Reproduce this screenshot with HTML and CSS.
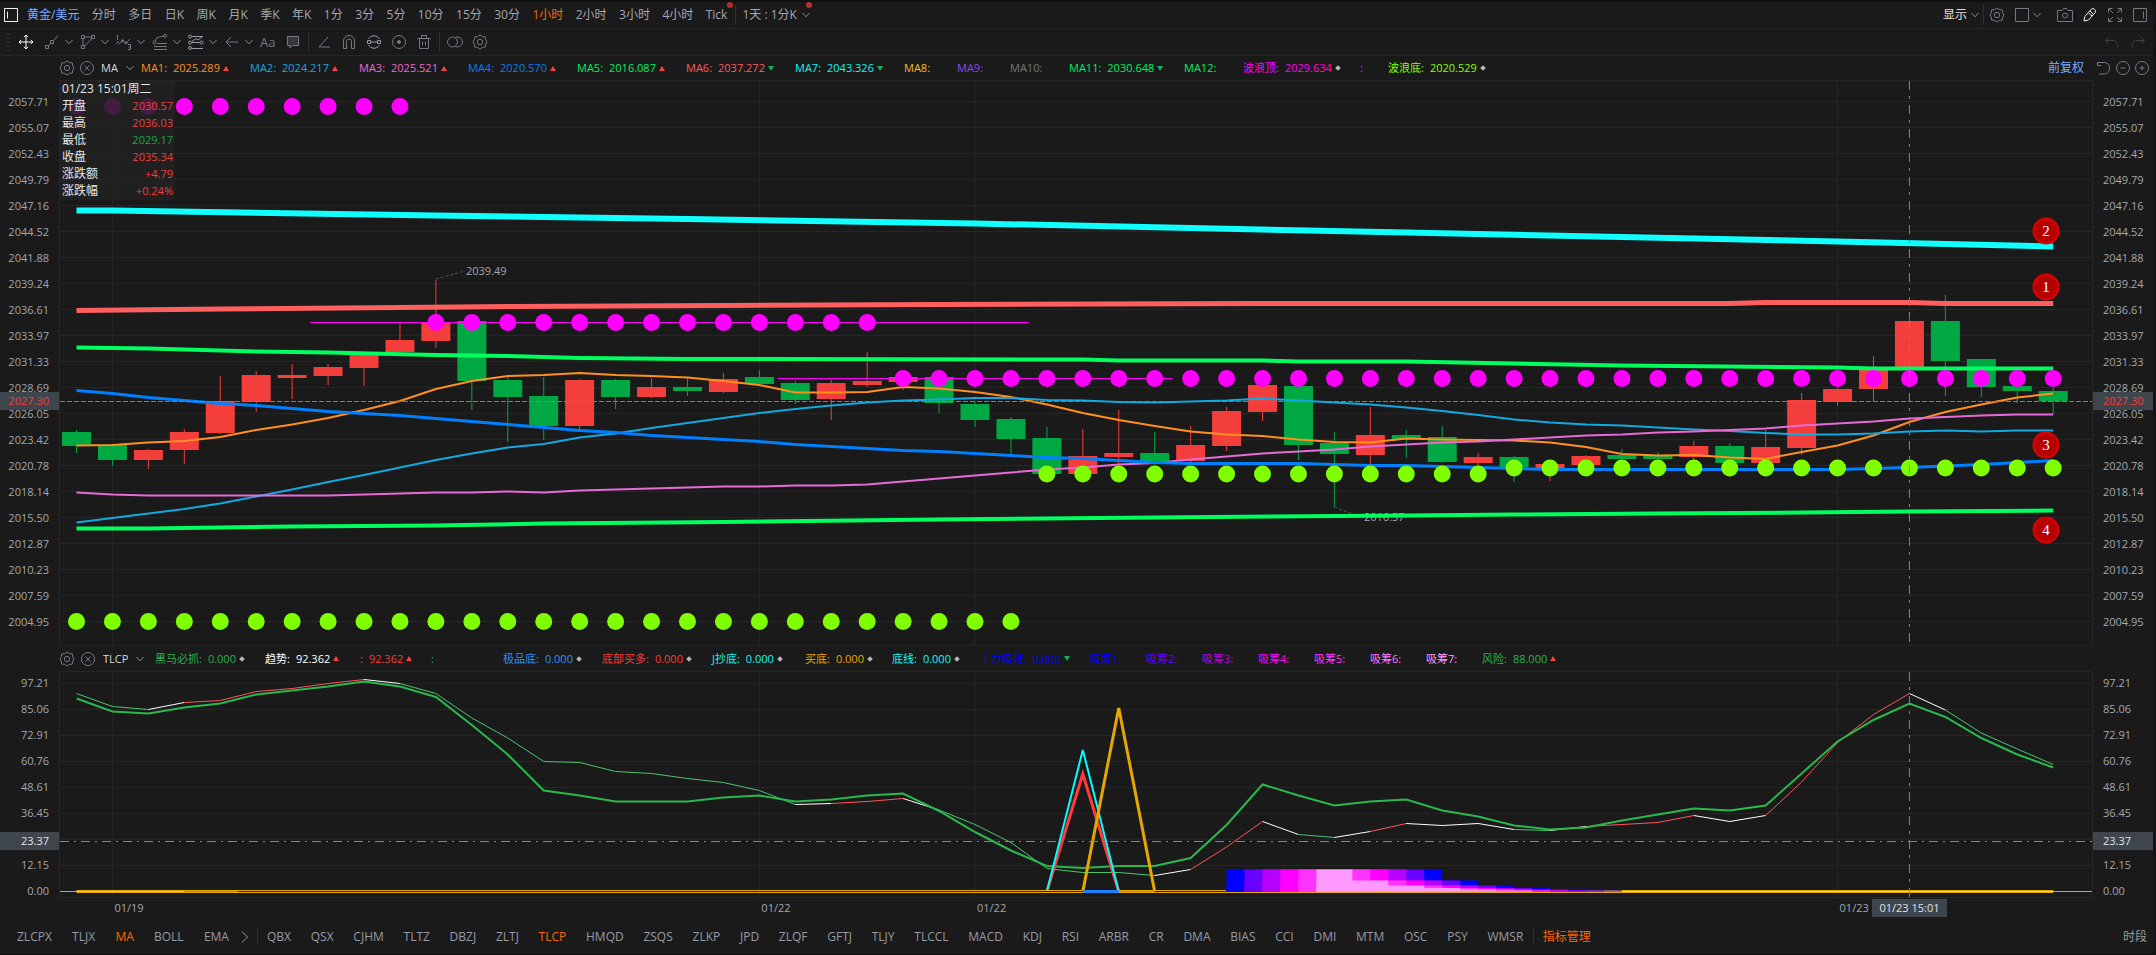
FILE: index.html
```html
<!DOCTYPE html>
<html lang="zh-CN">
<head>
<meta charset="utf-8">
<title>黄金/美元</title>
<link rel="stylesheet" href="styles.css">
</head>
<body>
<svg class="sprite" aria-hidden="true">
  <symbol id="chev" viewBox="0 0 10 10"><path d="M1.500 3 5 6.800 8.500 3"/></symbol>
  <symbol id="gear" viewBox="0 0 16 16"><path d="M5.700 2.600 8 1l2.300 1.600 3 .3.4 2.900L15 8l-1.300 2.200-.4 2.900-3 .3L8 15l-2.300-1.600-3-.3-.4-2.900L1 8l1.300-2.200.4-2.900z"/><circle cx="8" cy="8" r="2.700"/></symbol>
  <symbol id="close" viewBox="0 0 16 16"><circle cx="8" cy="8" r="6.500"/><path d="m5.500 5.500 5 5m0-5-5 5"/></symbol>
  <symbol id="undo" viewBox="0 0 16 16"><path d="M5 3 1.500 6.500 5 10M1.500 6.500H9q5 0 5 7"/></symbol>
  <symbol id="redo" viewBox="0 0 16 16"><path d="m11 3 3.500 3.500L11 10m3.500-3.500H7q-5 0-5 7"/></symbol>
</svg>

<header class="topbar">
  <button class="icon-btn bright" aria-label="侧栏"><svg viewBox="0 0 16 16"><path d="M1.500 1.500h13v13h-13zM4.500 4.500v7"/></svg></button>
  <nav class="periods">
    <button class="symbol-name">黄金/美元</button><button>分时</button><button>多日</button><button>日K</button><button>周K</button><button>月K</button><button>季K</button><button>年K</button><button>1分</button><button>3分</button><button>5分</button><button>10分</button><button>15分</button><button>30分</button><button class="active">1小时</button><button>2小时</button><button>3小时</button><button>4小时</button><button class="dotted">Tick</button>
  </nav>
  <span class="sep"></span>
  <button class="custom dotted">1天 : 1分K <svg class="chev"><use href="#chev"/></svg></button>
  <div class="top-actions">
    <button class="show">显示 <svg class="chev"><use href="#chev"/></svg></button>
    <span class="sep"></span>
    <button class="icon-btn" aria-label="设置"><svg><use href="#gear"/></svg></button>
    <button class="icon-btn layout" aria-label="布局"><svg viewBox="0 0 16 16"><path d="M1.500 1.500h13v13h-13z"/></svg><svg class="chev"><use href="#chev"/></svg></button>
    <button class="icon-btn" aria-label="截图"><svg viewBox="0 0 16 16"><path d="M.5 3.500H5l1.500-2h3l1.500 2h4.500v11H.5z"/><circle cx="8" cy="8.500" r="2.500"/></svg></button>
    <button class="icon-btn bright" aria-label="画线"><svg viewBox="0 0 16 16"><path d="m2 14 .8-4.500L9.500 2q1.300-1.300 3 .3t.7 3.200L6.500 13zM8 4l3.500 3.500M6.500 6l3.500 3"/></svg></button>
    <button class="icon-btn" aria-label="全屏"><svg viewBox="0 0 16 16"><path d="M1.500 5.500v-4h4m5 0h4v4m0 5v4h-4m-5 0h-4v-4M2 2l4 4m8-4-4 4m4 8-4-4m-8 4 4-4"/></svg></button>
    <button class="icon-btn" aria-label="右侧栏"><svg viewBox="0 0 16 16"><path d="M1.500 1.500h13v13h-13zM11.500 4.500v7"/></svg></button>
  </div>
</header>

<div class="toolbar">
  <span class="grip"></span>
  <button class="tool move" aria-label="移动"><svg viewBox="0 0 16 16"><path d="M8 1v14M1 8h14M6 3.200 8 1l2 2.200M6 12.800 8 15l2-2.200M3.200 6 1 8l2.200 2M12.800 6 15 8l-2.200 2"/></svg></button>
  <button class="tool combo" aria-label="线段"><svg viewBox="0 0 16 16"><path d="M1.500 11.500h3v3h-3zM6.500 6.500h3v3h-3zM4 12l3-3m2-2 5-5.500"/></svg><svg class="chev"><use href="#chev"/></svg></button>
  <button class="tool combo" aria-label="形状"><svg viewBox="0 0 16 16"><path d="M1.500 1.500h3v3h-3zM11.500 1.500h3v3h-3zM1.500 11.500h3v3h-3zM4.500 3h7M3 4.500v7M4.500 11.800 12 4.500"/></svg><svg class="chev"><use href="#chev"/></svg></button>
  <button class="tool combo" aria-label="波浪"><svg viewBox="0 0 16 16"><path d="m0 9.500 3-2M1.500 1v5M.5 2l1-1M2.500 10.500l4-4L10 9l4-4M12 10.500h2.500v5H12m.5-2.500h2"/><circle class="solid" cx="6.500" cy="6.800" r="1"/><circle class="solid" cx="10" cy="9" r="1"/></svg><svg class="chev"><use href="#chev"/></svg></button>
  <button class="tool combo" aria-label="斐波那契"><svg viewBox="0 0 16 16"><path d="M2 15.500h13M2 12.500h13M5 9.500h10M3 7l2-3.500 7-1.500"/><circle cx="2.500" cy="8.500" r="1.500"/><circle cx="13" cy="1.900" r="1.500"/></svg><svg class="chev"><use href="#chev"/></svg></button>
  <button class="tool combo lit" aria-label="通道"><svg viewBox="0 0 16 16"><path d="M3.500 2.500H15M3.500 8.500H12M3.500 14.500H15M4 7.500l4-3 2 1.500 4-3"/><circle cx="2" cy="2.500" r="1.500"/><circle cx="13.500" cy="8.500" r="1.500"/><circle cx="2" cy="8.500" r="1.500"/><circle cx="2" cy="14" r="1.500"/></svg><svg class="chev"><use href="#chev"/></svg></button>
  <button class="tool combo" aria-label="箭头"><svg viewBox="0 0 16 16"><path d="M14 8H2m5-5L2 8l5 5"/></svg><svg class="chev"><use href="#chev"/></svg></button>
  <button class="tool text-tool">Aa</button>
  <button class="tool" aria-label="注释"><svg viewBox="0 0 16 16"><path class="fill" d="M2.500 2.500h11v9H7.500L5 14v-2.500H2.500z"/></svg></button>
  <span class="sep"></span>
  <button class="tool" aria-label="角度"><svg viewBox="0 0 16 16"><path d="M12 3 3 13h11"/></svg></button>
  <button class="tool" aria-label="磁铁"><svg viewBox="0 0 16 16"><path d="M2.500 14.500V7a5.500 5.500 0 0 1 11 0v7.500h-3V7.500a2.500 2.500 0 0 0-5 0v7z"/></svg></button>
  <button class="tool lit" aria-label="连续画线"><svg viewBox="0 0 16 16"><path d="M2.500 5a6.200 6.200 0 0 1 11 0M2.500 11a6.200 6.200 0 0 0 11 0M1.500 6.500h3v3h-3zM11.500 6.500h3v3h-3zM4.500 8h7"/></svg></button>
  <button class="tool" aria-label="显示画线"><svg viewBox="0 0 16 16"><circle cx="8" cy="8" r="6.500"/><circle class="solid" cx="8" cy="8" r="1.500"/></svg></button>
  <button class="tool" aria-label="删除"><svg viewBox="0 0 16 16"><path d="M1.500 4.500h13M5.500 4V1.500h5V4M3.500 4.500v10h9v-10M6.500 7.500v4m3-4v4"/></svg></button>
  <span class="sep"></span>
  <button class="tool" aria-label="叠加"><svg viewBox="0 0 16 16"><circle cx="5.500" cy="8" r="5"/><path d="M8.500 3.400a5 5 0 1 1 0 9.200"/></svg></button>
  <button class="tool" aria-label="画线设置"><svg><use href="#gear"/></svg></button>
  <div class="history">
    <button class="tool" aria-label="撤销"><svg><use href="#undo"/></svg></button>
    <button class="tool" aria-label="重做"><svg><use href="#redo"/></svg></button>
  </div>
</div>

<main class="charts">
  <div class="legend">
    <div class="legend-head">
      <button class="icon-btn" aria-label="指标设置"><svg><use href="#gear"/></svg></button>
      <button class="icon-btn" aria-label="关闭指标"><svg><use href="#close"/></svg></button>
      <button class="ind-name">MA <svg class="chev"><use href="#chev"/></svg></button>
    </div>
    <ul class="values ma">
      <li class="c-orange">MA1:<b>2025.289</b><i class="up"></i></li>
      <li class="c-sky">MA2:<b>2024.217</b><i class="up"></i></li>
      <li class="c-pink">MA3:<b>2025.521</b><i class="up"></i></li>
      <li class="c-blue">MA4:<b>2020.570</b><i class="up"></i></li>
      <li class="c-green">MA5:<b>2016.087</b><i class="up"></i></li>
      <li class="c-coral">MA6:<b>2037.272</b><i class="down"></i></li>
      <li class="c-cyan">MA7:<b>2043.326</b><i class="down"></i></li>
      <li class="c-yellow">MA8:</li>
      <li class="c-violet">MA9:</li>
      <li class="c-grey">MA10:</li>
      <li class="c-green">MA11:<b>2030.648</b><i class="down"></i></li>
      <li class="c-green">MA12:</li>
      <li class="c-magenta">波浪顶:<b>2029.634</b><i class="flat"></i></li>
      <li class="c-magenta">:</li>
      <li class="c-lime">波浪底:<b>2020.529</b><i class="flat"></i></li>
    </ul>
    <div class="legend-actions">
      <button class="adjust">前复权</button>
      <button class="icon-btn" aria-label="还原"><svg viewBox="0 0 16 16"><path d="M1.500 2v3.500H5M2 2.500h6.500a5.800 5.800 0 0 1 0 11.500H3"/></svg></button>
      <button class="icon-btn" aria-label="缩小"><svg viewBox="0 0 16 16"><circle cx="8" cy="8" r="6.500"/><path d="M5.500 8h5"/></svg></button>
      <button class="icon-btn" aria-label="放大"><svg viewBox="0 0 16 16"><circle cx="8" cy="8" r="6.500"/><path d="M5.500 8h5M8 5.500v5"/></svg></button>
    </div>
  </div>

  <section class="pane price-pane">
    <div class="axis left" data-axis="price"></div>
    <div class="plot">
      <svg id="price"></svg>
      <dl class="quote">
        <div class="when">01/23 15:01周二</div>
        <dt>开盘</dt><dd>2030.57</dd>
        <dt>最高</dt><dd>2036.03</dd>
        <dt>最低</dt><dd class="fall">2029.17</dd>
        <dt>收盘</dt><dd>2035.34</dd>
        <dt>涨跌额</dt><dd>+4.79</dd>
        <dt>涨跌幅</dt><dd>+0.24%</dd>
      </dl>
    </div>
    <div class="axis right" data-axis="price"></div>
  </section>

  <div class="legend second">
    <div class="legend-head">
      <button class="icon-btn" aria-label="指标设置"><svg><use href="#gear"/></svg></button>
      <button class="icon-btn" aria-label="关闭指标"><svg><use href="#close"/></svg></button>
      <button class="ind-name">TLCP <svg class="chev"><use href="#chev"/></svg></button>
    </div>
    <ul class="values tlcp">
      <li class="c-leaf">黑马必抓:<b>0.000</b><i class="flat"></i></li>
      <li class="c-white">趋势:<b>92.362</b><i class="up"></i></li>
      <li class="c-red">:<b>92.362</b><i class="up"></i></li>
      <li class="c-leaf">:</li>
      <li class="c-azure">极品底:<b>0.000</b><i class="flat"></i></li>
      <li class="c-red">底部买多:<b>0.000</b><i class="flat"></i></li>
      <li class="c-cyan">J抄底:<b>0.000</b><i class="flat"></i></li>
      <li class="c-gold">买底:<b>0.000</b><i class="flat"></i></li>
      <li class="c-cyan">底线:<b>0.000</b><i class="flat"></i></li>
      <li class="c-deep">主力吸货:<b>0.000</b><i class="down"></i></li>
      <li class="c-deep">吸筹1:</li>
      <li class="c-chip2">吸筹2:</li>
      <li class="c-chip3">吸筹3:</li>
      <li class="c-magenta">吸筹4:</li>
      <li class="c-chip5">吸筹5:</li>
      <li class="c-chip6">吸筹6:</li>
      <li class="c-chip7">吸筹7:</li>
      <li class="c-leaf">风险:<b>88.000</b><i class="up"></i></li>
    </ul>
  </div>

  <section class="pane sub-pane">
    <div class="axis left" data-axis="sub"></div>
    <div class="plot"><svg id="sub"></svg></div>
    <div class="axis right" data-axis="sub"></div>
  </section>

  <div class="dates" id="dates"></div>
</main>

<footer class="tabs">
  <nav class="main-tabs"><button>ZLCPX</button><button>TLJX</button><button class="active">MA</button><button>BOLL</button><button>EMA</button></nav>
  <button class="more" aria-label="更多"><svg viewBox="0 0 10 16"><path d="m2 2.500 5.500 5.500L2 13.500"/></svg></button>
  <span class="sep"></span>
  <nav class="sub-tabs"><button>QBX</button><button>QSX</button><button>CJHM</button><button>TLTZ</button><button>DBZJ</button><button>ZLTJ</button><button class="active">TLCP</button><button>HMQD</button><button>ZSQS</button><button>ZLKP</button><button>JPD</button><button>ZLQF</button><button>GFTJ</button><button>TLJY</button><button>TLCCL</button><button>MACD</button><button>KDJ</button><button>RSI</button><button>ARBR</button><button>CR</button><button>DMA</button><button>BIAS</button><button>CCI</button><button>DMI</button><button>MTM</button><button>OSC</button><button>PSY</button><button>WMSR</button></nav>
  <span class="sep"></span>
  <button class="manage">指标管理</button>
  <button class="session">时段</button>
</footer>
<script src="chart.js"></script>
</body>
</html>
```
FILE: styles.css
```css
* { box-sizing: border-box; }
body {
  margin: 0;
  height: 100vh;
  display: flex;
  flex-direction: column;
  background: #1a1a1a;
  border-top: 2px solid #0f0f0f;
  border-right: 3px solid #141416;
  border-bottom: 1px solid #0f0f0f;
  color: #a2a7b0;
  font: 12px/16px "Open Sans", "Noto Sans", "Noto Sans CJK SC", sans-serif;
  overflow: hidden;
}
.sprite { display: none; }
button {
  border: 0;
  padding: 0;
  margin: 0;
  background: none;
  color: inherit;
  font: inherit;
  white-space: nowrap;
  flex: none;
}
button svg, symbol { fill: none; stroke: currentColor; stroke-width: 1; }
button svg { width: 16px; height: 16px; display: block; }
button svg.chev { width: 10px; height: 10px; color: #878c96; }
.sep { width: 1px; background: #303133; flex: none; }
.icon-btn { color: #747983; display: flex; align-items: center; }
.bright { color: #f0f0f0; }
.active { color: #ff6600; }
.solid { fill: currentColor; }
.fill { fill: #34363b; }

.topbar {
  flex: 0 0 27px;
  display: flex;
  align-items: center;
  padding: 0 5px 0 3px;
  border-bottom: 1px solid #262626;
}
.topbar .sep { height: 20px; }
.periods {
  flex: 0 0 33.400%;
  display: flex;
  justify-content: space-between;
  padding: 0 8px 0 8px;
}
.symbol-name, .adjust { color: #7eabff; }
.dotted { position: relative; }
.dotted::after {
  content: "";
  position: absolute;
  top: -5px;
  right: -6px;
  width: 6px;
  height: 6px;
  border-radius: 50%;
  background: #b52e2e;
}
.custom { display: flex; align-items: center; gap: 4px; margin-left: 6px; }
.custom::after { right: -1px; }
.top-actions { margin-left: auto; display: flex; align-items: center; gap: 9px; }
.top-actions .sep { margin-left: -6px; margin-right: -4px; }
.show { display: flex; align-items: center; gap: 3px; color: #e0e2e6; }
.layout { gap: 2px; margin-right: 6px; }

.toolbar {
  flex: 0 0 27px;
  display: flex;
  align-items: center;
  padding: 0 7px 0 6px;
  border-bottom: 1px solid #262626;
}
.grip {
  width: 5px;
  height: 17px;
  margin-right: 7px;
  background: repeating-linear-gradient(#2c2c2c 0 1px, transparent 1px 4px);
}
.tool { width: 16px; margin-right: 9px; color: #747983; display: flex; align-items: center; }
.tool svg { flex: none; }
.move { color: #fff; margin-right: 10px; }
.combo { width: 30px; gap: 4px; margin-right: 6px; }
.lit { color: #969ba5; }
.text-tool { font-size: 13px; }
.toolbar .sep { height: 20px; margin: 0 7px 0 -2px; }
.history { margin-left: auto; display: flex; gap: 10px; }
.history .tool { margin: 0; color: #3e4044; }

.charts { flex: 1; min-height: 0; display: flex; flex-direction: column; }
.legend {
  flex: 0 0 24px;
  display: flex;
  align-items: center;
  padding: 0 3px 0 59px;
  font-size: 11px;
}
.legend.second { flex-basis: 25px; }
.legend-head { display: flex; align-items: center; gap: 4px; width: 82px; flex: none; }
.second .legend-head { gap: 5px; width: 96px; }
.ind-name { display: flex; align-items: center; gap: 7px; margin-left: 2px; color: #d6d9de; }
.values { display: grid; margin: 0; padding: 0; list-style: none; white-space: nowrap; }
.values.ma { grid-template-columns: repeat(7, 109px) 53px 53px 59px 115px 59px 117px 28px auto; }
.values.tlcp { grid-template-columns: 110px 95px 71px 72px 99px 110px 93px 87px 88px 110px repeat(7, 56px) auto; }
.values li { display: flex; align-items: center; }
.values b { font-weight: 400; margin: 0 3px 0 6px; }
.up, .down { width: 0; height: 0; border: 3px solid transparent; }
.up { border-top: 0; border-bottom: 5px solid #f4443e; }
.down { border-bottom: 0; border-top: 5px solid #12b05a; }
.flat { width: 4px; height: 4px; margin-left: 1px; background: #b4b8bf; transform: rotate(45deg); }
.legend-actions { margin-left: auto; display: flex; align-items: center; gap: 3px; }
.adjust { font-size: 12px; margin-right: 9px; }

.c-orange { color: #ff9020; } .c-sky { color: #11a9e0; } .c-pink { color: #e86ad8; }
.c-blue { color: #0a7cf5; } .c-green { color: #00f060; } .c-coral { color: #ff5c5c; }
.c-cyan { color: #11f5f5; } .c-yellow { color: #f0c020; } .c-violet { color: #8d48e8; }
.c-grey { color: #777; } .c-magenta { color: #ff00ff; } .c-lime { color: #80ff00; }
.c-leaf { color: #2ab04e; } .c-white { color: #fff; } .c-red { color: #f23d3d; }
.c-azure { color: #2e8ff0; } .c-gold { color: #e6a800; } .c-deep { color: #0000ff; }
.c-chip2 { color: #6600ff; } .c-chip3 { color: #b800e0; } .c-chip5 { color: #ff33ff; }
.c-chip6 { color: #ff77ff; } .c-chip7 { color: #ff99ff; }

.pane { display: grid; grid-template-columns: 59px 1fr 60px; min-height: 0; }
.price-pane { flex: 566 1 0; }
.sub-pane { flex: 227 1 0; }
.plot { position: relative; border: 1px solid #262626; min-width: 0; min-height: 0; }
.plot svg { display: block; width: 100%; height: 100%; position: absolute; inset: 0; }
.axis {
  position: relative;
  display: flex;
  flex-direction: column;
  padding: 9px 0 11px;
  font-size: 11px;
}
.axis span { flex: 1 1 0; display: flex; align-items: center; padding: 0 10px; }
.axis.left span { justify-content: flex-end; }
.sub-pane .axis { padding: 0; margin: -1px 0 -6px; }
.axis .tag {
  position: absolute;
  left: 0;
  right: 0;
  height: 18px;
  margin-top: -9px;
  background: #3e454d;
  color: #f23d3a;
}
.sub-pane .tag { color: #e0e3e8; }

.quote {
  position: absolute;
  left: 0;
  top: 0;
  width: 115px;
  margin: 0;
  padding: 0 2px;
  display: grid;
  grid-template-columns: auto 1fr;
  grid-auto-rows: 17px;
  background: rgba(34, 34, 34, 0.86);
  color: #e6e6e6;
}
.quote .when { grid-column: 1 / 3; }
.quote dd { margin: 0; font-size: 11px; text-align: right; color: #f23d3a; }
.quote .fall { color: #10a848; }

.dates { flex: 0 0 20px; position: relative; font-size: 11px; }
.dates span { position: absolute; top: 1px; line-height: 18px; padding-left: 2px; }
.dates .cursor {
  padding: 0 7px;
  background: #3e454d;
  color: #e0e3e8;
  transform: translateX(-50%);
}

.tabs {
  flex: 0 0 36px;
  display: flex;
  align-items: center;
  padding: 2px 6px 0 17px;
  color: #959ba5;
}
.tabs nav { display: flex; justify-content: space-between; }
.main-tabs { flex: 0 0 212px; }
.sub-tabs { flex: 0 0 59%; }
.more { margin: 0 7px 0 11px; }
.more svg { width: 10px; height: 16px; }
.tabs .sep { height: 16px; margin-right: 9px; }
.sub-tabs + .sep { margin-left: 9px; }
.manage { color: #ff6600; }
.session { margin-left: auto; }
```
FILE: chart.js
```js
// Plot geometry: every series is stored in plot units, scaled to the element on draw.
const UNITS = { w: 2032, price: { top: 80, h: 566 }, sub: { top: 671, h: 227 } };
const FIRST = 16.5, STEP = 35.94;

const UP = '#f43e3c', DOWN = '#00a843';

// [rising, high, body top, body bottom, low]
const candles = [
  [0,430,432,446,453],[0,444,445,460,466],[1,449,450,460,469],[1,429,432,450,464],
  [1,376,401,433,434],[1,371,375,402,412],[1,364,375,378,399],[1,364,367,376,385],
  [1,354,355,368,386],[1,322,340,352,353],[1,280,323,341,348],[0,321,321,381,410],
  [0,376,380,397,442],[0,377,396,426,440],[1,379,380,426,429],[0,379,380,397,409],
  [1,378,387,397,398],[0,378,387,391,396],[1,373,379,392,393],[0,370,377,384,384],
  [0,381,383,400,404],[1,380,383,399,420],[1,352,381,385,387],[1,377,377,382,390],
  [0,377,377,403,413],[0,402,404,420,427],[0,417,419,439,454],[0,427,438,474,474],
  [1,429,456,474,474],[1,410,453,457,465],[0,432,453,461,465],[1,426,445,461,465],
  [1,407,411,446,451],[1,378,385,412,421],[0,386,386,445,460],[0,432,443,454,507],
  [1,407,435,455,465],[0,430,435,439,458],[0,426,437,462,463],[1,453,457,463,466],
  [0,456,457,467,482],[1,462,464,468,481],[1,455,456,465,466],[0,449,455,459,460],
  [0,452,455,459,460],[1,441,446,457,460],[0,443,446,463,477],[1,430,447,463,464],
  [1,393,400,448,455],[1,388,389,402,406],[1,356,370,389,401],[1,313,321,367,367],
  [0,295,321,361,396],[0,359,359,387,397],[0,386,386,391,403],[0,388,391,401,414]
];

const seq = ys => ys.map((y, i) => [i, y]);

const averages = [
  { color: '#ff9020', width: 2, pts: seq([445.5,445,442.5,441,437,430,424.5,418,410,401,389,381,376,375,373,375,376,377.5,381,385,392.5,392.5,392,387,388.5,392,397,404.5,413,420,426,431.5,434.5,436,439.5,442,442.5,438.5,439.5,440,440.5,442.5,447,454,455.5,455,457.5,459,452,445.5,435.5,422,412,404.5,397.5,393.5]) },
  { color: '#11a9e0', width: 2, pts: seq([522.5,518,513.5,509,503.5,496.5,489.5,482,475,467.5,460,453.5,447.5,444,437.5,433.5,428,423,418,413,409,405.5,402.5,400.5,399.5,398,398,400,400.5,402,402.5,401.5,400.5,398.5,400.5,402.5,404.5,407.5,411,415,419.5,422.5,424.5,425.5,427.5,429.5,431,433,434.5,434.5,433.5,431.5,430.5,431.5,430.5,430.5]) },
  { color: '#e86ad8', width: 2, pts: seq([492.5,494.5,495.5,495.5,495.5,495.5,495.5,495.5,494.5,493.5,492.5,492.5,491.5,492.5,490.5,489.5,488.5,487.5,486.5,486.5,485.5,485.5,484.5,481.5,478.5,475.5,472.5,469.5,467.5,464.5,463,459.5,456.5,453.5,451.5,449.5,446.5,444.5,442.5,441.5,439.5,437.5,435.5,434.5,432.5,431.5,430,428.5,425.5,423.5,421.5,418.5,417,415.5,414.5,414.5]) },
  { color: '#0080ff', width: 3, pts: seq([390.5,393.5,397.5,400.5,403.5,405.5,408.5,411.5,413.5,415.5,418.5,421.5,424.5,427.5,430.5,432.5,435.5,437.5,439.5,441.5,444.5,446.5,448.5,450.5,451.5,453.5,455.5,457.5,458.5,460.5,462.5,463.5,463.5,463.5,463.5,464.5,465.5,465.5,466.5,467.5,468.5,469.5,469.5,469.5,469.5,469.5,469.5,469.5,469.5,469.5,468.5,467.5,466,464.5,462.5,460.5]) },
  { color: '#00ff5e', width: 4, pts: [[0,528.5],[2,528.5],[6,526.5],[10,525.5],[13,523.5],[18,522],[24,519.5],[30,517.5],[37,515.5],[40,514.5],[44,513.5],[48,512.5],[51,511.5],[55,510.5]] },
  { color: '#ff5f5f', width: 5, pts: [[0,310.5],[4,309],[9,307.5],[12,306.5],[18,305.5],[24,304.5],[33,303.5],[46,303.5],[47,302.5],[51,302.5],[52,303.5],[55,303.5]] },
  { color: '#11ffff', width: 6, pts: [[0,210.5],[1,210.5],[10,215.5],[17,219],[25,223.5],[37,232.5],[49,241.5],[55,246.5]] },
  { color: '#00ff5e', width: 4, pts: [[0,347.5],[2,348.5],[5,351.5],[7,352.5],[10,355],[12,356],[14,358],[17,359],[28,359.5],[29,360.5],[33,360.5],[34,361.5],[37,361.5],[43,365.5],[49,367.5],[50,368.5],[55,368.5]] }
];

// [colour, y, first index, last index]
const dots = [
  ['#ff00ff',106.5,0,9],['#ff00ff',322.5,10,22],['#ff00ff',378.5,23,55],
  ['#80ff00',621.5,0,26],['#80ff00',474,27,39],['#80ff00',468,40,55]
];

const risk = [698.5,711.5,713.5,707.5,703.5,694.5,690.5,686.5,681.5,686.5,697,725,754.5,790.5,795.5,801.5,801.5,801.5,797.5,795.5,801.5,799.5,795.5,793.5,811,832,850.5,866,868,866,866,858,825,784.5,795.5,805.5,801.5,799.5,810.5,816.5,825.5,829.5,827.5,820.5,814.5,808.5,810.5,805.5,773.5,741.5,720,703.5,717,738,754.5,767.5];
const trend = [693.5,706.5,709.5,702.5,700.5,691.5,688.5,683.5,679.5,683.5,693.5,718,738,761.5,762.5,771.5,773.5,778.5,782.5,790.5,804.5,803.5,801.5,798.5,810,824.5,842.5,868.5,872.5,872.5,875.5,869.5,847,821.5,834.5,837.5,831.5,823.5,825.5,823.5,829.5,830.5,826.5,824.5,822.5,815.5,821.5,815.5,782,742.5,714.5,693.5,710,733,749,764.5];

const badges = [[2, 231], [1, 287], [3, 445], [4, 530]];
const days = [[1, '01/19'], [19, '01/22'], [25, '01/22'], [49, '01/23']];
const CURSOR = 51;
const LABEL = 'font-family="Open Sans, Noto Sans, sans-serif" font-size="11" fill="#a2a7b0"';

function frame(svg, unit) {
  const w = svg.clientWidth, h = svg.clientHeight;
  const kx = w / UNITS.w, ky = h / (unit.h - 2);
  const px = v => +(v * kx).toFixed(2);
  return { w, h, kx, px, x: i => px(FIRST + i * STEP), y: v => +((v - unit.top - 1) * ky).toFixed(2) };
}
const line = (x1, y1, x2, y2, stroke, more = '') =>
  `<line x1="${x1}" y1="${y1}" x2="${x2}" y2="${y2}" stroke="${stroke}" ${more}/>`;
const poly = (f, pts, stroke, width) =>
  `<polyline fill="none" stroke="${stroke}" stroke-width="${width}" points="${pts.map(([i, y]) => f.x(i) + ',' + f.y(y)).join(' ')}"/>`;

function grid(f, start, rows) {
  let s = '';
  for (let k = 0; k < rows; k++) s += line(0, f.y(start + 26 * k), f.w, f.y(start + 26 * k), '#262626');
  for (const [i] of days) s += line(f.x(i), 0, f.x(i), f.h, '#262626');
  return s;
}

function drawPrice() {
  const svg = document.getElementById('price'), f = frame(svg, UNITS.price);
  let s = grid(f, 101.5, 21);
  s += line(f.x(10), f.y(279), f.px(405), f.y(271), '#555', 'stroke-dasharray="3 2"');
  s += `<text x="${f.px(406)}" y="${f.y(275)}" ${LABEL}>2039.49</text>`;
  s += line(f.x(35), f.y(507), f.px(1292), f.y(514), '#555', 'stroke-dasharray="3 2"');
  s += `<text x="${f.px(1304)}" y="${f.y(521)}" ${LABEL}>2016.57</text>`;
  const half = 14.5 * f.kx;
  candles.forEach(([up, hi, top, bottom, lo], i) => {
    const c = up ? UP : DOWN;
    s += line(f.x(i), f.y(hi), f.x(i), f.y(lo), c);
    s += `<rect x="${f.x(i) - half}" y="${f.y(top)}" width="${half * 2}" height="${f.y(bottom) - f.y(top)}" fill="${c}"/>`;
  });
  for (const a of averages) s += poly(f, a.pts, a.color, a.width);
  s += poly(f, [[6.5, 322.5], [26.5, 322.5]], '#ff00ff', 1);
  s += poly(f, [[19.5, 378.5], [30.5, 378.5]], '#ff00ff', 1);
  s += line(0, f.y(401.5), f.w, f.y(401.5), '#e06410', 'stroke-dasharray="5 2"');
  for (const [c, y, a, b] of dots)
    for (let i = a; i <= b; i++) s += `<circle cx="${f.x(i)}" cy="${f.y(y)}" r="8.5" fill="${c}"/>`;
  s += line(f.x(CURSOR), 0, f.x(CURSOR), f.h, '#80848c', 'stroke-dasharray="9 6 3 6"');
  for (const [n, y] of badges) {
    s += `<circle cx="${f.px(1986)}" cy="${f.y(y)}" r="12.5" fill="#b60000" stroke="#e00000" stroke-width="2"/>`;
    s += `<text x="${f.px(1986)}" y="${f.y(y) + 5}" text-anchor="middle" font-family="Liberation Serif, serif" font-size="15" fill="#fff">${n}</text>`;
  }
  svg.innerHTML = s;
}

function drawSub() {
  const svg = document.getElementById('sub'), f = frame(svg, UNITS.sub);
  const base = 891.5;
  let s = grid(f, 683.5, 9);
  s += line(0, f.y(base), f.w, f.y(base), '#ff66ff');
  for (let i = 1; i < trend.length; i++) {
    const now = trend[i] < trend[i - 1], before = i > 1 ? trend[i - 1] < trend[i - 2] : now;
    const c = now !== before ? '#ffffff' : now ? '#ff5555' : '#4cc470';
    s += poly(f, [[i - 1, trend[i - 1]], [i, trend[i]]], c, 1);
  }
  s += poly(f, seq(risk), '#2ab84e', 2);
  s += poly(f, [[27, base], [28, 774], [29, base]], '#ff3b3b', 3);
  s += poly(f, [[27, base], [28, 750], [29, base]], '#00ffff', 2);
  s += poly(f, [[28, base], [29, 708], [30, base]], '#e6a800', 3);
  s += poly(f, [[0, base], [55, base]], '#e6a800', 3);
  s += poly(f, [[0, base], [3, base]], '#ff99ff', 1);
  s += poly(f, [[3, base], [4.5, base]], '#ff33ff', 1);
  s += poly(f, [[4.5, base], [32, base]], '#1a1a9c', 1);
  s += poly(f, [[28, base], [29, base]], '#1e80ff', 3);
  s += poly(f, [[29, base], [30, base]], '#7f9a90', 1);
  s += poly(f, [[38, base], [55, base]], '#ffc0ff', 1);
  const shades = ['#0000ff', '#6a00ff', '#b800ff', '#ff00ff', '#ff33ff', '#ff99ff'];
  const decay = [[22, 38], [11, 39], [6, 40], [3.5, 41], [2, 42], [1, 43]];
  shades.forEach((c, j) => {
    for (const [height, end] of decay) {
      const a = f.x(32 + j / 2), b = f.x(end - j / 2);
      s += `<rect x="${a}" y="${f.y(base - height)}" width="${b - a}" height="${f.y(base) - f.y(base - height)}" fill="${c}"/>`;
    }
  });
  s += line(0, f.y(841.5), f.w, f.y(841.5), '#80848c', 'stroke-dasharray="9 5 2 5"');
  s += line(f.x(CURSOR), 0, f.x(CURSOR), f.h, '#80848c', 'stroke-dasharray="9 6 3 6"');
  svg.innerHTML = s;
}

function drawDates() {
  const svg = document.getElementById('price'), f = frame(svg, UNITS.price);
  document.getElementById('dates').innerHTML =
    days.map(([i, t]) => `<span style="left:${f.x(i) + 60}px">${t}</span>`).join('') +
    `<span class="cursor" style="left:${f.x(CURSOR) + 60}px">01/23 15:01</span>`;
}

const prices = ['2057.71','2055.07','2052.43','2049.79','2047.16','2044.52','2041.88','2039.24','2036.61','2033.97','2031.33','2028.69','2026.05','2023.42','2020.78','2018.14','2015.50','2012.87','2010.23','2007.59','2004.95'];
const levels = ['97.21','85.06','72.91','60.76','48.61','36.45','\u00a0','12.15','0.00'];
document.querySelectorAll('.axis').forEach(axis => {
  const main = axis.dataset.axis === 'price';
  const [value, share] = main ? ['2027.30', 321.5 / 566] : ['23.37', 171.5 / 234];
  axis.innerHTML = (main ? prices : levels).map(t => `<span>${t}</span>`).join('') +
    `<span class="tag" style="top:${(share * 100).toFixed(2)}%">${value}</span>`;
});

function draw() { drawPrice(); drawSub(); drawDates(); }
draw();
addEventListener('resize', draw);
```
